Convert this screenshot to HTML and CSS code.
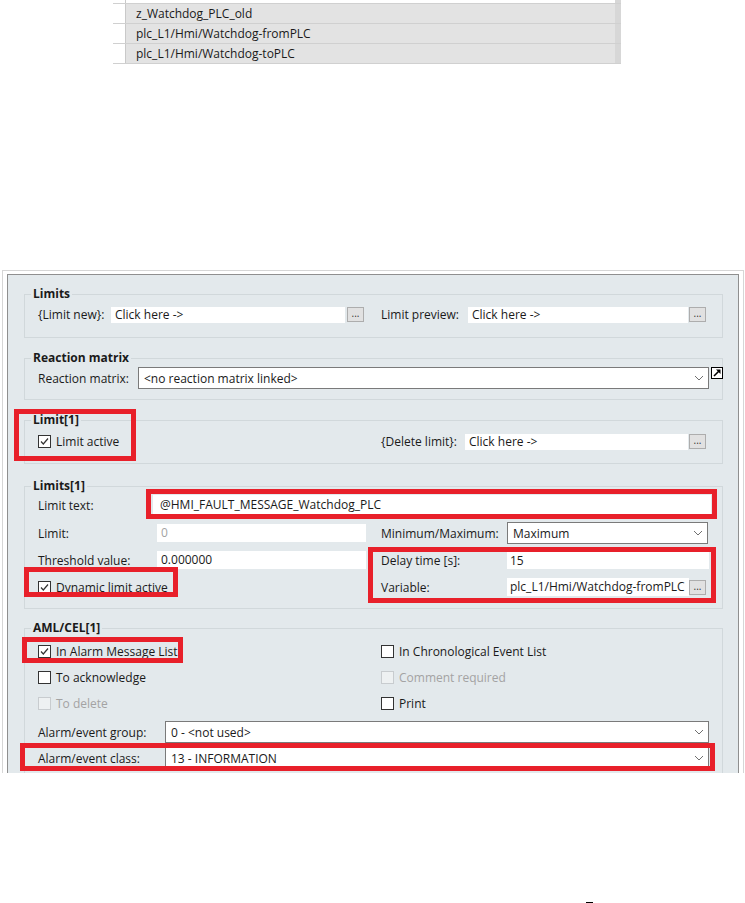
FILE: index.html
```html
<!DOCTYPE html>
<html lang="en">
<head>
  <meta charset="UTF-8">
  <title>Limit properties</title>
  <link rel="stylesheet" href="styles.css">
</head>
<body>
  <div class="list">
    <div class="list-row top"><span class="list-hdr"></span><span class="list-cell blank"></span><span class="list-bar"></span></div>
    <div class="list-row"><span class="list-hdr"></span><span class="list-cell">z_Watchdog_PLC_old</span><span class="list-bar"></span></div>
    <div class="list-row"><span class="list-hdr"></span><span class="list-cell">plc_L1/Hmi/Watchdog-fromPLC</span><span class="list-bar"></span></div>
    <div class="list-row"><span class="list-hdr"></span><span class="list-cell">plc_L1/Hmi/Watchdog-toPLC</span><span class="list-bar"></span></div>
  </div>

  <div class="frame">
    <div class="panel">

      <fieldset class="group g-limits">
        <legend>Limits</legend>
        <div class="row">
          <div class="half">
            <span class="lbl lbl-new">{Limit new}:</span>
            <span class="field f-new">Click here -&gt;</span>
            <span class="dots">...</span>
          </div>
          <span class="lbl lbl-preview">Limit preview:</span>
          <span class="field f-preview">Click here -&gt;</span>
          <span class="dots tight">...</span>
        </div>
      </fieldset>

      <fieldset class="group g-reaction">
        <legend>Reaction matrix</legend>
        <div class="row">
          <span class="lbl lbl-reaction">Reaction matrix:</span>
          <div class="select s-reaction">
            <span>&lt;no reaction matrix linked&gt;</span>
            <svg width="10" height="6" viewBox="0 0 10 6"><polyline points="1,1 5,5 9,1" fill="none" stroke="#707070" stroke-width="1"/></svg>
          </div>
          <span class="link-icon">
            <svg width="10" height="10" viewBox="0 0 10 10"><path d="M2 8 L7 3" stroke="#000" stroke-width="1.6"/><polygon points="4,1.5 8.5,1.5 8.5,6" fill="#000"/></svg>
          </span>
        </div>
      </fieldset>

      <fieldset class="group g-limit1">
        <legend>Limit[1]</legend>
        <div class="row">
          <div class="half">
            <span class="cb"><svg width="11" height="11" viewBox="0 0 11 11"><polyline points="2,5.5 4.3,8 9,2.5" fill="none" stroke="#333" stroke-width="1.2"/></svg></span>
            <span>Limit active</span>
          </div>
          <span class="lbl lbl-delete">{Delete limit}:</span>
          <span class="field f-delete">Click here -&gt;</span>
          <span class="dots tight">...</span>
        </div>
      </fieldset>

      <fieldset class="group g-limits1">
        <legend>Limits[1]</legend>
        <div class="row r-text">
          <span class="lbl lbl-text">Limit text:</span>
          <span class="field f-text">@HMI_FAULT_MESSAGE_Watchdog_PLC</span>
        </div>
        <div class="row r-limit">
          <div class="half">
            <span class="lbl lbl-left">Limit:</span>
            <span class="field f-left muted">0</span>
          </div>
          <span class="lbl lbl-right">Minimum/Maximum:</span>
          <div class="select s-minmax">
            <span>Maximum</span>
            <svg width="10" height="6" viewBox="0 0 10 6"><polyline points="1,1 5,5 9,1" fill="none" stroke="#707070" stroke-width="1"/></svg>
          </div>
        </div>
        <div class="row r-threshold">
          <div class="half">
            <span class="lbl lbl-left">Threshold value:</span>
            <span class="field f-left">0.000000</span>
          </div>
          <span class="lbl lbl-right">Delay time [s]:</span>
          <span class="field f-delay">15</span>
        </div>
        <div class="row r-variable">
          <div class="half">
            <span class="cb"><svg width="11" height="11" viewBox="0 0 11 11"><polyline points="2,5.5 4.3,8 9,2.5" fill="none" stroke="#333" stroke-width="1.2"/></svg></span>
            <span>Dynamic limit active</span>
          </div>
          <span class="lbl lbl-right">Variable:</span>
          <span class="field f-variable">plc_L1/Hmi/Watchdog-fromPLC</span>
          <span class="dots flush">...</span>
        </div>
      </fieldset>

      <fieldset class="group g-aml">
        <legend>AML/CEL[1]</legend>
        <div class="row r-check">
          <div class="half">
            <span class="cb"><svg width="11" height="11" viewBox="0 0 11 11"><polyline points="2,5.5 4.3,8 9,2.5" fill="none" stroke="#333" stroke-width="1.2"/></svg></span>
            <span>In Alarm Message List</span>
          </div>
          <span class="cb"></span>
          <span>In Chronological Event List</span>
        </div>
        <div class="row r-check">
          <div class="half">
            <span class="cb"></span>
            <span>To acknowledge</span>
          </div>
          <span class="cb off"></span>
          <span class="muted">Comment required</span>
        </div>
        <div class="row r-check">
          <div class="half">
            <span class="cb off"></span>
            <span class="muted">To delete</span>
          </div>
          <span class="cb"></span>
          <span>Print</span>
        </div>
        <div class="row r-group">
          <span class="lbl lbl-alarm">Alarm/event group:</span>
          <div class="select s-alarm">
            <span>0 - &lt;not used&gt;</span>
            <svg width="10" height="6" viewBox="0 0 10 6"><polyline points="1,1 5,5 9,1" fill="none" stroke="#707070" stroke-width="1"/></svg>
          </div>
        </div>
        <div class="row r-class">
          <span class="lbl lbl-alarm">Alarm/event class:</span>
          <div class="select s-alarm">
            <span>13 - INFORMATION</span>
            <svg width="10" height="6" viewBox="0 0 10 6"><polyline points="1,1 5,5 9,1" fill="none" stroke="#707070" stroke-width="1"/></svg>
          </div>
        </div>
      </fieldset>

      <!-- red highlight frames drawn over the dialog -->
      <div class="mark m-active"></div>
      <div class="mark m-text"></div>
      <div class="mark m-dynamic"></div>
      <div class="mark m-delay"></div>
      <div class="mark m-aml"></div>
      <div class="mark m-class"></div>
    </div>
  </div>

  <div class="foot"></div>
</body>
</html>
```

FILE: styles.css
```css
body {
  margin: 0;
  background-color: #fff;
  font-family: "Open Sans", "Noto Sans", sans-serif;
  font-size: 12px;
  color: #1a1a1a;
}

/* variable list at the top */
.list {
  margin-left: 113px;
  width: 508px;
}
.list-row {
  display: flex;
  height: 19px;
  border-bottom: 1px solid #d0d0d0;
}
.list-row.top {
  height: 3px;
}
.list-hdr {
  width: 12px;
  background-color: #fff;
  border-right: 1px solid #c9c9c9;
}
.list-cell {
  width: 489px;
  padding-left: 10px;
  box-sizing: border-box;
  background-color: #e3e3e3;
  line-height: 19px;
  white-space: nowrap;
}
.list-cell.blank {
  background-color: #fff;
}
.list-bar {
  width: 6px;
  background-color: #d7d7d7;
}

/* dialog */
.frame {
  margin: 206px 1px 0 2px;
  padding: 3px 4px 0;
  border: 1px solid #d6d6d6;
  border-bottom: none;
}
.panel {
  position: relative;
  height: 499px;
  box-sizing: border-box;
  overflow: hidden;
  padding: 11px 15px 0 16px;
  background-color: #e3e9ec;
  border: 1px solid #8f8f8f;
  border-bottom: none;
}
.group {
  margin: 0;
  padding: 0 0 0 13px;
  min-width: 0;
  border: 1px solid #d1d8db;
}
.group legend {
  margin-left: -7px;
  padding: 0 2px;
  font-weight: bold;
  line-height: 16px;
}
.g-limits {
  padding-top: 4px;
  padding-bottom: 14px;
}
.g-reaction {
  margin-top: 12px;
  padding-top: 1px;
  padding-bottom: 10px;
}
.g-limit1 {
  margin-top: 12px;
  padding-top: 5px;
  padding-bottom: 13px;
}
.g-limits1 {
  margin-top: 14px;
  padding-top: 1px;
  padding-bottom: 12px;
}
.g-aml {
  margin-top: 11px;
  padding-top: 2px;
  padding-bottom: 20px;
}

.row {
  display: flex;
  align-items: center;
  white-space: nowrap;
}
.half {
  display: flex;
  align-items: center;
  width: 343px;
  flex: none;
}
.lbl {
  flex: none;
}
.lbl-new { width: 73px; }
.lbl-preview { width: 87px; }
.lbl-reaction { width: 100px; }
.lbl-delete { width: 84px; }
.lbl-text { width: 115px; }
.lbl-left { width: 119px; }
.lbl-right { width: 126px; }
.lbl-alarm { width: 127px; }

.field {
  flex: none;
  height: 16px;
  line-height: 16px;
  padding-left: 4px;
  box-sizing: border-box;
  background-color: #fff;
  overflow: hidden;
}
.f-new { width: 234px; }
.f-preview { width: 220px; }
.f-delete { width: 223px; }
.f-text {
  width: 558px;
  height: 20px;
  line-height: 20px;
  padding-left: 7px;
}
.f-left {
  width: 209px;
  height: 18px;
  line-height: 18px;
}
.f-delay {
  width: 202px;
  height: 17px;
  line-height: 17px;
  padding-left: 3px;
}
.f-variable {
  width: 182px;
  height: 18px;
  line-height: 18px;
  padding-left: 3px;
}
.muted {
  color: #a3a3a3;
}

.select {
  flex: none;
  display: flex;
  align-items: center;
  justify-content: space-between;
  height: 22px;
  padding: 0 4px 0 5px;
  box-sizing: border-box;
  background-color: #fff;
  border: 1px solid #7a7a7a;
}
.s-reaction { width: 571px; }
.s-minmax { width: 201px; }
.s-alarm { width: 544px; }

.dots {
  flex: none;
  width: 17px;
  height: 15px;
  margin-left: 2px;
  box-sizing: border-box;
  background-color: #e1e1e1;
  border: 1px solid #adadad;
  font-size: 10px;
  line-height: 11px;
  text-align: center;
  color: #333;
}
.dots.tight { margin-left: 1px; }
.dots.flush { margin-left: 0; }

.link-icon {
  flex: none;
  align-self: flex-start;
  display: flex;
  align-items: center;
  justify-content: center;
  width: 12px;
  height: 12px;
  margin-left: 2px;
  box-sizing: border-box;
  background-color: #fff;
  border: 1px solid #000;
}

.cb {
  flex: none;
  display: flex;
  align-items: center;
  justify-content: center;
  width: 13px;
  height: 13px;
  margin-right: 5px;
  box-sizing: border-box;
  background-color: #fff;
  border: 1px solid #333;
}
.cb.off {
  background-color: #eef1f2;
  border-color: #c8cccf;
}

.r-limit { margin-top: 7px; }
.r-threshold { margin-top: 7px; }
.r-variable { margin-top: 9px; }
.r-check { height: 26px; }
.r-group { margin-top: 5px; }
.r-class { margin-top: 4px; }

/* red annotation frames */
.mark {
  position: absolute;
  box-sizing: border-box;
  border: 5px solid #e8202a;
}
.m-active { left: 6px; top: 134px; width: 122px; height: 52px; }
.m-text { left: 138px; top: 214px; width: 571px; height: 30px; }
.m-dynamic { left: 16px; top: 292px; width: 154px; height: 30px; }
.m-delay { left: 360px; top: 272px; width: 348px; height: 56px; }
.m-aml { left: 14px; top: 362px; width: 161px; height: 26px; }
.m-class { left: 12px; top: 468px; width: 695px; height: 28px; }

.foot {
  width: 7px;
  height: 1px;
  margin: 129px 0 0 586px;
  background-color: #000;
}
```
